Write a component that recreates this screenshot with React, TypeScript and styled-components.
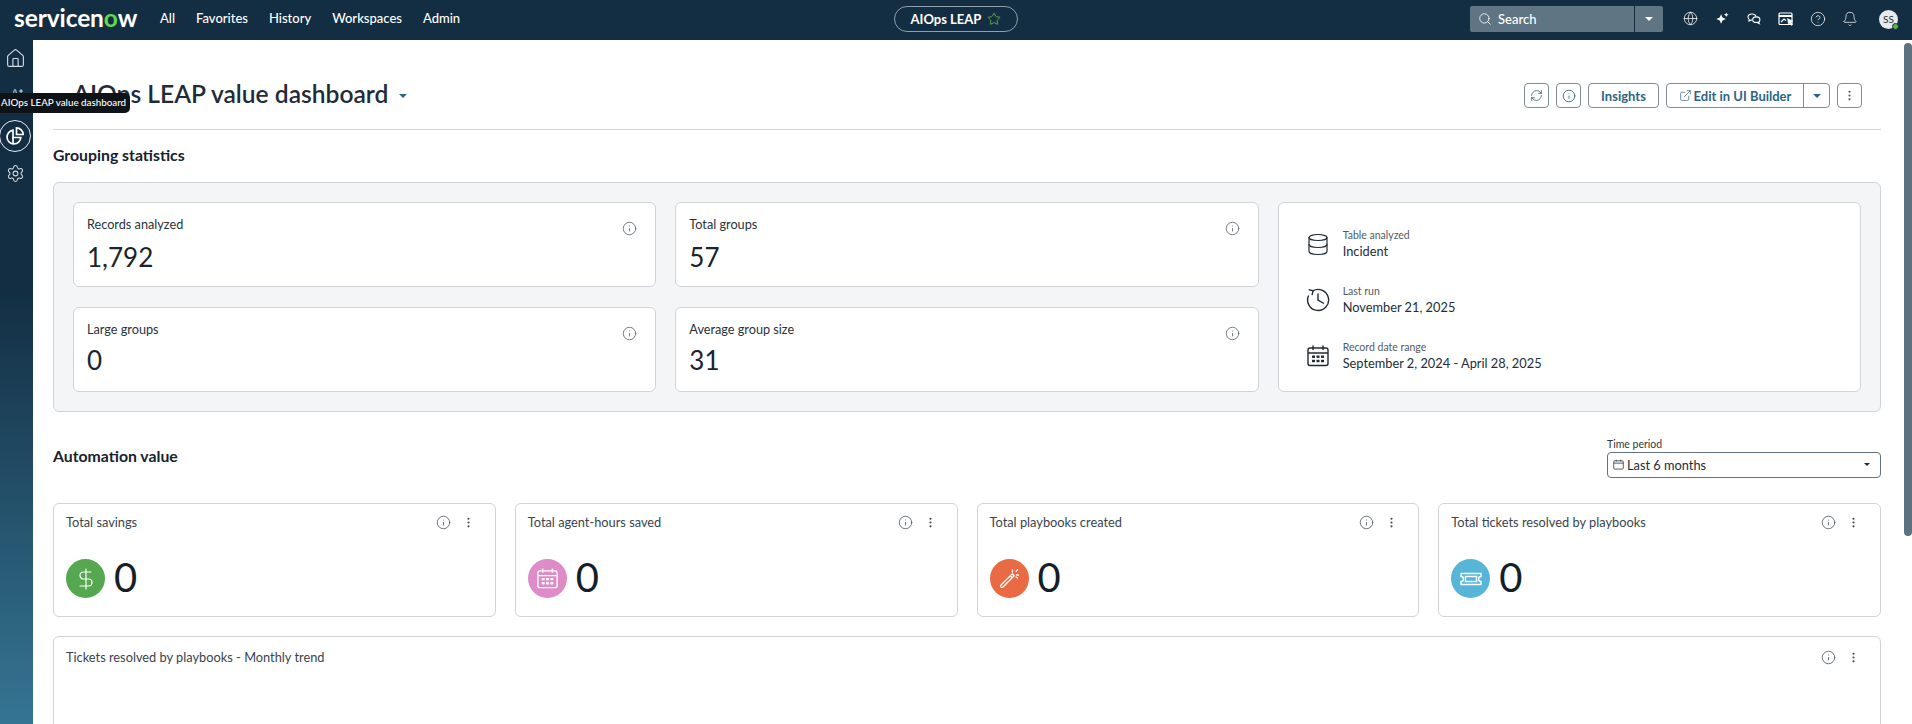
import styled, { createGlobalStyle } from "styled-components";
import {
  Bell,
  CircleHelp,
  Database,
  DollarSign,
  EllipsisVertical,
  ExternalLink,
  Globe,
  House,
  Info,
  RefreshCw,
  Search,
  Settings,
  Sparkles,
  Star,
} from "lucide-react";

const GlobalStyle = createGlobalStyle`
  html, body {
    margin: 0;
    padding: 0;
    height: 100%;
    overflow: hidden;
    background: #fff;
    font-family: Lato, "Open Sans", sans-serif;
    color: #1d2833;
  }
  * { box-sizing: border-box; }
`;

const Shell = styled.div`
  width: 100%;
  height: 100vh;
  display: flex;
  flex-direction: column;
  overflow: hidden;
  position: relative;
`;

const TopBar = styled.header`
  height: 40px;
  flex: none;
  background: #132e43;
  display: flex;
  align-items: center;
  padding: 0 14px;
  color: #fff;
`;

const TopLeft = styled.div`
  flex: 1;
  display: flex;
  align-items: center;
`;

const TopRight = styled.div`
  flex: 1;
  display: flex;
  align-items: center;
  justify-content: flex-end;
`;

const Logo = styled.div`
  width: 118px;
  font-size: 24.5px;
  font-weight: 700;
  letter-spacing: -0.1px;
  line-height: 40px;
  margin-top: -4px;
  white-space: nowrap;

  span {
    color: #62d84e;
  }
`;

const Nav = styled.nav`
  display: flex;
  gap: 21px;
  margin-left: 28px;
  margin-top: -4px;
  font-size: 13px;
  font-weight: 500;
`;

const ScopePill = styled.div`
  width: 124px;
  height: 26px;
  border: 1px solid #8fa0ac;
  border-radius: 13px;
  display: flex;
  align-items: center;
  justify-content: center;
  gap: 6px;
  font-size: 13px;
  font-weight: 700;
  margin-top: -2px;
`;

const SearchBox = styled.div`
  width: 193px;
  height: 26px;
  border-radius: 2px;
  background: #5f7584;
  display: flex;
  align-items: center;
  margin-right: 11px;
  margin-top: -2px;
`;

const SearchField = styled.div`
  width: 165px;
  height: 100%;
  display: flex;
  align-items: center;
  gap: 6px;
  padding-left: 8px;
  font-size: 13px;
  font-weight: 500;
  border-right: 1px solid #132e43;
`;

const CaretBox = styled.div`
  flex: 1;
  display: flex;
  align-items: center;
  justify-content: center;
`;

const Caret = styled.span<{ $size?: number; $color?: string }>`
  display: inline-block;
  width: 0;
  height: 0;
  border-left: ${(p) => p.$size ?? 4}px solid transparent;
  border-right: ${(p) => p.$size ?? 4}px solid transparent;
  border-top: ${(p) => (p.$size ?? 4) * 0.95}px solid ${(p) => p.$color ?? "#fff"};
`;

const TopIcons = styled.div`
  display: grid;
  grid-template-columns: repeat(6, 32px);
  justify-items: center;
  align-items: center;
  margin-right: 13px;
  margin-top: -3px;

  svg {
    display: block;
  }
`;

const Avatar = styled.div`
  width: 19px;
  height: 19px;
  border-radius: 50%;
  background: #e8ebed;
  color: #1f3140;
  font-size: 10px;
  display: flex;
  align-items: center;
  justify-content: center;
  position: relative;
  margin-top: -2px;
`;

const AvatarBadge = styled.span`
  position: absolute;
  right: -1px;
  bottom: -1px;
  width: 7px;
  height: 7px;
  border-radius: 50%;
  background: #5fb346;
  border: 1px solid #132e43;
`;

const Body = styled.div`
  flex: 1;
  min-height: 0;
  display: flex;
`;

const Sidebar = styled.aside`
  width: 33px;
  flex: none;
  background: linear-gradient(180deg, #132e43 0, #132e43 250px, #357593 100%);
  display: flex;
  flex-direction: column;
  align-items: center;
  color: #d5dde2;
  padding-top: 2px;
`;

const SideIcon = styled.div<{ $active?: boolean }>`
  width: 32px;
  height: 32px;
  flex: none;
  margin-left: -3px;
  border-radius: 50%;
  display: flex;
  align-items: center;
  justify-content: center;
  border: ${(p) => (p.$active ? "1px solid #e6ebee" : "none")};
  color: ${(p) => (p.$active ? "#fff" : "#d5dde2")};
  margin-bottom: ${(p) => (p.$active ? "5px" : "0")};
`;

const SideStub = styled.div`
  height: 46px;
  width: 32px;
  flex: none;
  margin-left: -3px;
  display: flex;
  align-items: center;
  justify-content: center;
`;

const Tooltip = styled.div`
  position: absolute;
  left: 0;
  top: 93px;
  width: 130px;
  height: 20px;
  background: #0e1318;
  border-radius: 0 5px 5px 0;
  color: #fff;
  font-size: 9.8px;
  font-weight: 500;
  line-height: 19px;
  padding-left: 1px;
  white-space: nowrap;
  z-index: 5;
`;

const Main = styled.main`
  flex: 1;
  min-width: 0;
  overflow: hidden;
  padding: 0 23px 0 20px;
`;

const PageHeader = styled.div`
  height: 90px;
  padding: 43px 19px 21px 20px;
  border-bottom: 1px solid #d3d6d9;
  display: flex;
  align-items: center;
  justify-content: space-between;
`;

const TitleWrap = styled.div`
  display: flex;
  align-items: center;
  gap: 11px;
`;

const Title = styled.h1`
  margin: -4px 0 0;
  font-size: 24.6px;
  font-weight: 600;
  color: #1f2c38;
  white-space: nowrap;
`;

const Actions = styled.div`
  display: flex;
  align-items: center;
  gap: 7px;
`;

const OutlineButton = styled.button<{ $width?: number }>`
  height: 25px;
  width: ${(p) => (p.$width ? `${p.$width}px` : "auto")};
  padding: 0;
  border: 1px solid #7d8c97;
  border-radius: 4px;
  background: #fff;
  color: #2e6482;
  font-family: inherit;
  font-size: 13px;
  font-weight: 700;
  display: flex;
  align-items: center;
  justify-content: center;
`;

const SplitButton = styled.div`
  height: 25px;
  width: 164px;
  border: 1px solid #7d8c97;
  border-radius: 4px;
  display: flex;
  color: #2e6482;
  font-size: 13px;
  font-weight: 700;
`;

const SplitLabel = styled.div`
  width: 137px;
  border-right: 1px solid #7d8c97;
  display: flex;
  align-items: center;
  justify-content: center;
  gap: 2px;
`;

const SplitCaret = styled.div`
  flex: 1;
  display: flex;
  align-items: center;
  justify-content: center;
`;

const SectionTitle = styled.h2<{ $spaced?: boolean }>`
  margin: ${(p) => (p.$spaced ? "0 0 3px" : "13px 0 15px")};
  font-size: 15.8px;
  line-height: 24px;
  font-weight: 700;
  color: #18222c;
`;

const Panel = styled.section`
  height: 230px;
  border: 1px solid #d0d4d8;
  border-radius: 6px;
  background: #f4f5f7;
  padding: 19px;
  display: grid;
  grid-template-columns: repeat(3, 1fr);
  grid-template-rows: 85px 85px;
  gap: 20px 19px;
`;

const StatCard = styled.div`
  background: #fff;
  border: 1px solid #d0d4d8;
  border-radius: 6px;
  padding: 12px 15px 0 13px;
  display: flex;
  justify-content: space-between;
`;

const StatLabel = styled.div`
  font-size: 12.7px;
  line-height: 18px;
  color: #28323c;
`;

const StatValue = styled.div<{ $tight?: boolean }>`
  margin-top: ${(p) => (p.$tight ? "6px" : "8px")};
  font-size: 26px;
  line-height: 32px;
  color: #1a242e;
`;

const StatInfo = styled.div`
  color: #4a5560;
  margin-top: 5px;
  margin-right: 3px;
`;

const DetailCard = styled.div`
  grid-row: 1 / span 2;
  grid-column: 3;
  background: #fff;
  border: 1px solid #d0d4d8;
  border-radius: 6px;
  padding: 24px 0 0 27px;
  display: flex;
  flex-direction: column;
  gap: 22px;
`;

const DetailRow = styled.div`
  display: flex;
  align-items: center;
  gap: 13px;
  height: 34px;
  color: #1f2a35;
`;

const DetailIcon = styled.div`
  width: 24px;
  height: 24px;
  display: flex;
  align-items: center;
  justify-content: center;
  flex: none;
`;

const DetailLabel = styled.div`
  font-size: 10.5px;
  line-height: 14px;
  color: #505b66;
`;

const DetailValue = styled.div`
  font-size: 12.8px;
  line-height: 18px;
  color: #232e38;
`;

const AutomationHead = styled.div`
  margin-top: 25px;
  display: flex;
  justify-content: space-between;
  align-items: center;
`;

const PeriodField = styled.div`
  width: 274px;
`;

const PeriodLabel = styled.div`
  font-size: 10.5px;
  line-height: 14px;
  color: #2f3942;
  margin-bottom: 1px;
`;

const PeriodSelect = styled.div`
  height: 26px;
  border: 1px solid #63717c;
  border-radius: 4px;
  display: flex;
  align-items: center;
  padding: 0 10px 1px 5px;
  gap: 3px;
  font-size: 12.8px;
  color: #222c36;
`;

const PeriodText = styled.span`
  flex: 1;
`;

const KpiGrid = styled.div`
  margin-top: 25px;
  display: grid;
  grid-template-columns: repeat(4, 1fr);
  gap: 19px;
`;

const KpiCard = styled.div`
  height: 114px;
  border: 1px solid #d0d4d8;
  border-radius: 6px;
  padding: 9px 20px 0 12px;
`;

const CardHead = styled.div`
  display: flex;
  align-items: center;
  height: 18px;
`;

const CardTitle = styled.div`
  flex: 1;
  font-size: 12.8px;
  line-height: 18px;
  color: #3a444e;
`;

const CardTools = styled.div`
  display: flex;
  align-items: center;
  gap: 11px;
  color: #3f4a54;
`;

const KpiBody = styled.div`
  display: flex;
  align-items: center;
  gap: 9px;
  margin-top: 28px;
`;

const KpiBadge = styled.div<{ $bg: string }>`
  width: 39px;
  height: 39px;
  border-radius: 50%;
  background: ${(p) => p.$bg};
  color: #fff;
  display: flex;
  align-items: center;
  justify-content: center;
`;

const KpiValue = styled.div`
  font-size: 40px;
  line-height: 39px;
  margin-top: -2px;
  color: #161e26;
`;

const TrendCard = styled.div`
  margin-top: 19px;
  height: 220px;
  border: 1px solid #d0d4d8;
  border-radius: 6px 6px 0 0;
  padding: 11px 20px 0 12px;
`;

const ScrollTrack = styled.div`
  width: 8px;
  flex: none;
  padding-top: 3px;
`;

const ScrollThumb = styled.div`
  height: 493px;
  background: #5d7280;
  border-radius: 4px;
`;

const SparkleIcon = () => (
  <svg width="15" height="15" viewBox="0 0 16 16" fill="#fff">
    <path d="M6.5 3.5 8 7l3.5 1.5L8 10l-1.5 3.5L5 10 1.5 8.5 5 7z" />
    <path d="M12 1.5l.7 1.8 1.8.7-1.8.7-.7 1.8-.7-1.8-1.8-.7 1.8-.7z" />
  </svg>
);

const ChatIcon = () => (
  <svg width="16" height="16" viewBox="0 0 16 16" fill="none" stroke="#fff" strokeWidth="1.1">
    <path d="M6 3c-2.3 0-4 1.3-4 3 0 1 .5 1.7 1.2 2.3L3 10l2-1c.4.1.7.1 1 .1" />
    <path d="M6 3c2 0 3.6 1 4 2.4" />
    <ellipse cx="10.3" cy="8.7" rx="3.6" ry="2.8" />
    <path d="M12.5 11l.8 1.6-2.2-1" />
  </svg>
);

const ScreenIcon = () => (
  <svg width="18" height="18" viewBox="0 0 18 18" fill="none" stroke="#fff" strokeWidth="1.2">
    <rect x="2" y="3" width="13" height="11.5" rx="1" />
    <path d="M2 6h13" strokeWidth="2" />
    <path d="M4 12l3-3 2 1.5" />
    <path d="M10.5 8.5l5.5 2.7-2.3.8 2 2.6-1.2.9-2-2.6-1 2z" fill="#fff" strokeWidth="0.5" />
  </svg>
);

const PieIcon = () => (
  <svg width="20" height="20" viewBox="0 0 20 20" fill="none" stroke="#fff" strokeWidth="1.7">
    <path d="M8 4.2a6.9 6.9 0 1 0 7.8 7.3H8z" />
    <path d="M8 11.5v6.8" />
    <path d="M11.5 1.8a6.8 6.8 0 0 1 6.7 6.7h-6.7z" />
  </svg>
);

const CalendarIcon = ({ size, width }: { size: number; width: number }) => (
  <svg width={size} height={size} viewBox="0 0 24 24" fill="none" stroke="currentColor" strokeWidth={width}>
    <rect x="2" y="4" width="20" height="17.5" rx="2" />
    <path d="M2 9h20M7 1.5v4.5M17 1.5v4.5" />
    <g fill="currentColor" stroke="none">
      <rect x="6" y="11.5" width="3" height="2.4" />
      <rect x="10.5" y="11.5" width="3" height="2.4" />
      <rect x="15" y="11.5" width="3" height="2.4" />
      <rect x="6" y="15.8" width="3" height="2.4" />
      <rect x="10.5" y="15.8" width="3" height="2.4" />
      <rect x="15" y="15.8" width="3" height="2.4" />
    </g>
  </svg>
);

const LastRunIcon = () => (
  <svg width="24" height="24" viewBox="0 0 24 24" fill="none" stroke="currentColor" strokeWidth="1.4">
    <path d="M6.8 2.9A10.5 10.5 0 1 1 2.6 7.5" />
    <path d="M2.6 1.6l4.5 1.2-1.1 4.4" />
    <path d="M12 5.5V12l6 3.5" />
  </svg>
);

const WandIcon = () => (
  <svg width="24" height="24" viewBox="0 0 24 24" fill="none" stroke="#fff" strokeWidth="1.3">
    <path d="M15.2 6.8l2 2L6 20c-.6.6-1.4.6-2 0s-.6-1.4 0-2z" />
    <path d="M13.3 8.7l2 2" />
    <path d="M15.5 3v2M20.5 2.8l-1.3 1.6M21.5 8h-2M20.5 11l-1.4-1" strokeLinecap="round" />
  </svg>
);

const TicketIcon = () => (
  <svg width="24" height="24" viewBox="0 0 24 24" fill="none" stroke="#fff" strokeWidth="1.4">
    <path d="M2 6.5h20v3a2.5 2.5 0 0 0 0 5v3H2v-3a2.5 2.5 0 0 0 0-5z" />
    <rect x="6.5" y="9.5" width="11" height="5" />
  </svg>
);

const InfoSmall = () => <Info size={15} strokeWidth={1.2} />;
const MoreSmall = () => <EllipsisVertical size={13} strokeWidth={2} />;

const kpis = [
  { title: "Total savings", bg: "#55a84f", icon: <DollarSign size={24} strokeWidth={1.2} /> },
  { title: "Total agent-hours saved", bg: "#de8cc7", icon: <CalendarIcon size={23} width={1.4} /> },
  { title: "Total playbooks created", bg: "#ea6a43", icon: <WandIcon /> },
  { title: "Total tickets resolved by playbooks", bg: "#57b6d8", icon: <TicketIcon /> },
];

export default function App() {
  return (
    <Shell>
      <GlobalStyle />
      <TopBar>
        <TopLeft>
          <Logo>
            servicen<span>o</span>w
          </Logo>
          <Nav>
            <span>All</span>
            <span>Favorites</span>
            <span>History</span>
            <span>Workspaces</span>
            <span>Admin</span>
          </Nav>
        </TopLeft>
        <ScopePill>
          AIOps LEAP
          <Star size={14} color="#62b44c" strokeWidth={1.5} />
        </ScopePill>
        <TopRight>
          <SearchBox>
            <SearchField>
              <Search size={14} strokeWidth={1.4} />
              Search
            </SearchField>
            <CaretBox>
              <Caret $size={4.5} />
            </CaretBox>
          </SearchBox>
          <TopIcons>
            <Globe size={15} color="#fff" strokeWidth={1.2} />
            <SparkleIcon />
            <ChatIcon />
            <ScreenIcon />
            <CircleHelp size={16} color="#fff" strokeWidth={1.1} />
            <Bell size={16} color="#fff" strokeWidth={1.1} />
          </TopIcons>
          <Avatar>
            SS
            <AvatarBadge />
          </Avatar>
        </TopRight>
      </TopBar>
      <Tooltip>AIOps LEAP value dashboard</Tooltip>
      <Body>
        <Sidebar>
          <SideIcon>
            <House size={21} strokeWidth={1.3} />
          </SideIcon>
          <SideStub>
            <Sparkles size={18} strokeWidth={1.3} />
          </SideStub>
          <SideIcon $active>
            <PieIcon />
          </SideIcon>
          <SideIcon>
            <Settings size={19} strokeWidth={1.3} />
          </SideIcon>
        </Sidebar>
        <Main>
          <PageHeader>
            <TitleWrap>
              <Title>AIOps LEAP value dashboard</Title>
              <Caret $size={4.5} $color="#2e6482" />
            </TitleWrap>
            <Actions>
              <OutlineButton $width={25}>
                <RefreshCw size={13} strokeWidth={1.5} />
              </OutlineButton>
              <OutlineButton $width={25}>
                <Info size={14} strokeWidth={1.5} />
              </OutlineButton>
              <OutlineButton $width={71}>Insights</OutlineButton>
              <SplitButton>
                <SplitLabel>
                  <ExternalLink size={13} strokeWidth={1.3} />
                  Edit in UI Builder
                </SplitLabel>
                <SplitCaret>
                  <Caret $size={4.5} $color="#2e6482" />
                </SplitCaret>
              </SplitButton>
              <OutlineButton $width={25}>
                <EllipsisVertical size={13} strokeWidth={2} />
              </OutlineButton>
            </Actions>
          </PageHeader>

          <SectionTitle>Grouping statistics</SectionTitle>
          <Panel>
            <StatCard>
              <div>
                <StatLabel>Records analyzed</StatLabel>
                <StatValue>1,792</StatValue>
              </div>
              <StatInfo>
                <InfoSmall />
              </StatInfo>
            </StatCard>
            <StatCard>
              <div>
                <StatLabel>Total groups</StatLabel>
                <StatValue>57</StatValue>
              </div>
              <StatInfo>
                <InfoSmall />
              </StatInfo>
            </StatCard>
            <DetailCard>
              <DetailRow>
                <DetailIcon>
                  <Database size={25} strokeWidth={1.2} />
                </DetailIcon>
                <div>
                  <DetailLabel>Table analyzed</DetailLabel>
                  <DetailValue>Incident</DetailValue>
                </div>
              </DetailRow>
              <DetailRow>
                <DetailIcon>
                  <LastRunIcon />
                </DetailIcon>
                <div>
                  <DetailLabel>Last run</DetailLabel>
                  <DetailValue>November 21, 2025</DetailValue>
                </div>
              </DetailRow>
              <DetailRow>
                <DetailIcon>
                  <CalendarIcon size={24} width={1.4} />
                </DetailIcon>
                <div>
                  <DetailLabel>Record date range</DetailLabel>
                  <DetailValue>September 2, 2024 - April 28, 2025</DetailValue>
                </div>
              </DetailRow>
            </DetailCard>
            <StatCard>
              <div>
                <StatLabel>Large groups</StatLabel>
                <StatValue $tight>0</StatValue>
              </div>
              <StatInfo>
                <InfoSmall />
              </StatInfo>
            </StatCard>
            <StatCard>
              <div>
                <StatLabel>Average group size</StatLabel>
                <StatValue $tight>31</StatValue>
              </div>
              <StatInfo>
                <InfoSmall />
              </StatInfo>
            </StatCard>
          </Panel>

          <AutomationHead>
            <SectionTitle $spaced>Automation value</SectionTitle>
            <PeriodField>
              <PeriodLabel>Time period</PeriodLabel>
              <PeriodSelect>
                <svg width="11" height="11" viewBox="0 0 12 12" fill="none" stroke="#333d46" strokeWidth="0.9">
                  <rect x="0.8" y="2" width="10.4" height="9" rx="1" />
                  <path d="M0.8 4.5h10.4M3.5 0.8v2M8.5 0.8v2" />
                </svg>
                <PeriodText>Last 6 months</PeriodText>
                <Caret $size={3.5} $color="#1d2833" />
              </PeriodSelect>
            </PeriodField>
          </AutomationHead>

          <KpiGrid>
            {kpis.map((kpi) => (
              <KpiCard key={kpi.title}>
                <CardHead>
                  <CardTitle>{kpi.title}</CardTitle>
                  <CardTools>
                    <InfoSmall />
                    <MoreSmall />
                  </CardTools>
                </CardHead>
                <KpiBody>
                  <KpiBadge $bg={kpi.bg}>{kpi.icon}</KpiBadge>
                  <KpiValue>0</KpiValue>
                </KpiBody>
              </KpiCard>
            ))}
          </KpiGrid>

          <TrendCard>
            <CardHead>
              <CardTitle>Tickets resolved by playbooks - Monthly trend</CardTitle>
              <CardTools>
                <InfoSmall />
                <MoreSmall />
              </CardTools>
            </CardHead>
          </TrendCard>
        </Main>
        <ScrollTrack>
          <ScrollThumb />
        </ScrollTrack>
      </Body>
    </Shell>
  );
}
